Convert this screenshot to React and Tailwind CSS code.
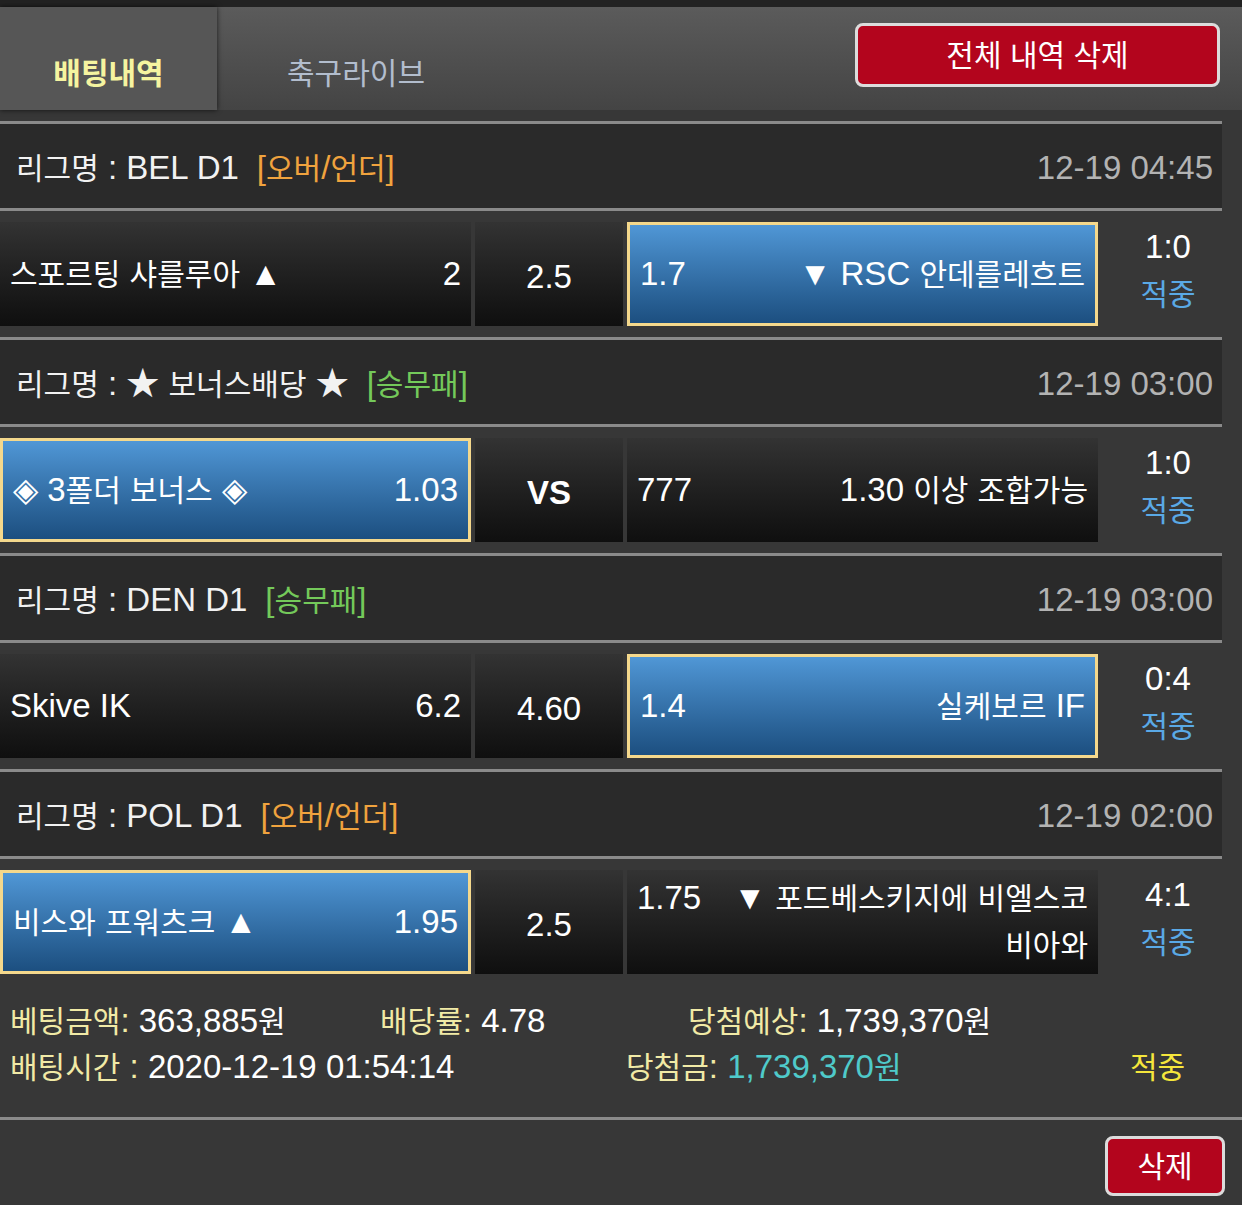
import React from 'react';

const bets = [
  {
    league: 'BEL D1', type: '[오버/언더]', typeColor: 'text-[#f0a33e]', time: '12-19 04:45',
    home: '스포르팅 샤를루아 ▲', homeOdds: '2', mid: '2.5', awayOdds: '1.7', away: '▼ RSC 안데를레흐트',
    pick: 'away', score: '1:0', result: '적중',
  },
  {
    league: '★ 보너스배당 ★', type: '[승무패]', typeColor: 'text-[#74c95a]', time: '12-19 03:00',
    home: '◈ 3폴더 보너스 ◈', homeOdds: '1.03', mid: 'VS', midBold: true, awayOdds: '777', away: '1.30 이상 조합가능',
    pick: 'home', score: '1:0', result: '적중',
  },
  {
    league: 'DEN D1', type: '[승무패]', typeColor: 'text-[#74c95a]', time: '12-19 03:00',
    home: 'Skive IK', homeOdds: '6.2', mid: '4.60', awayOdds: '1.4', away: '실케보르 IF',
    pick: 'away', score: '0:4', result: '적중',
  },
  {
    league: 'POL D1', type: '[오버/언더]', typeColor: 'text-[#f0a33e]', time: '12-19 02:00',
    home: '비스와 프워츠크 ▲', homeOdds: '1.95', mid: '2.5', awayOdds: '1.75', away: '▼ 포드베스키지에 비엘스코 비아와',
    pick: 'home', score: '4:1', result: '적중',
  },
];

// hangul glyphs run narrower in the original, so they get a slightly smaller size than latin text
const T = ({ children }) =>
  String(children)
    .split(/([\u3131-\uD7A3]+)/)
    .map((p, i) => (/[\u3131-\uD7A3]/.test(p) ? <span key={i} className="text-[30px]">{p}</span> : p));

const cellBase = 'flex h-[104px] items-center px-[10px] text-white';
const darkCell = 'bg-gradient-to-b from-[#333333] to-[#0f0f0f]';
const pickedCell = 'border-[3px] border-[#f4d88c] bg-gradient-to-b from-[#5097d6] to-[#1c4f80] px-[7px]';

const Line = () => <div className="h-[3px] w-[1222px] bg-[#8a8a8a]" />;

const BetRow = ({ bet }) => (
  <div>
    <Line />
    <div className="flex h-[84px] w-[1222px] items-center justify-between bg-[#2a2a2a] pl-[16px] pr-[9px] pt-[4px]">
      <div className="text-[#f2f2f2]">
        <T>{`리그명 : ${bet.league}`}</T>
        <span className={`ml-[18px] ${bet.typeColor}`}><T>{bet.type}</T></span>
      </div>
      <div className="text-[#b3b3b3]">{bet.time}</div>
    </div>
    <Line />
    <div className="flex h-[126px] w-[1222px] items-center gap-[4px]">
      <div className={`${cellBase} w-[471px] justify-between ${bet.pick === 'home' ? pickedCell : darkCell}`}>
        <span><T>{bet.home}</T></span>
        <span>{bet.homeOdds}</span>
      </div>
      <div className={`${cellBase} w-[148px] justify-center pt-[6px] ${darkCell} ${bet.midBold ? 'font-bold' : ''}`}>
        {bet.mid}
      </div>
      <div className={`${cellBase} w-[471px] ${bet.pick === 'away' ? pickedCell : darkCell}`}>
        <div className="w-full break-keep leading-[46px]">
          <span className="float-left">{bet.awayOdds}</span>
          <div className="text-right"><T>{bet.away}</T></div>
        </div>
      </div>
      <div className="flex flex-1 flex-col items-center pl-[12px] pb-[8px] leading-[47px]">
        <span className="text-white">{bet.score}</span>
        <span className="text-[#5aa9e6]"><T>{bet.result}</T></span>
      </div>
    </div>
  </div>
);

export default function App() {
  return (
    <div className="min-h-[1205px] w-[1242px] bg-[#373737] font-['Liberation_Sans','Noto_Sans_CJK_KR',sans-serif] text-[33px]">
      <div className="h-[7px] bg-[#222222]" />
      <div className="flex h-[103px] bg-gradient-to-b from-[#5b5b5b] to-[#444444] text-[30px]">
        <div className="flex w-[217px] items-center justify-center bg-[#565656] pt-[29px] shadow-[0_0_5px_rgba(0,0,0,0.7)]">
          <span className="font-bold text-[#f5f4a0]">배팅내역</span>
        </div>
        <div className="flex w-[278px] items-center justify-center pt-[29px] text-[#b2bdcd]">축구라이브</div>
        <div className="flex flex-1 items-start justify-end pr-[22px] pt-[16px]">
          <button className="h-[64px] w-[365px] rounded-[8px] border-[3px] border-[#dcdcdc] bg-[#b3051d] text-white">
            전체 내역 삭제
          </button>
        </div>
      </div>
      <div className="h-[11px]" />

      {bets.map((bet, i) => (
        <BetRow key={i} bet={bet} />
      ))}

      <div className="h-[132px] px-[10px] pt-[13px] leading-[45px] text-white">
        <div className="flex">
          <div className="w-[370px]"><span className="text-[#f1eaa6]"><T>베팅금액:</T></span> <T>363,885원</T></div>
          <div className="w-[308px]"><span className="text-[#f1eaa6]"><T>배당률:</T></span> 4.78</div>
          <div><span className="text-[#f1eaa6]"><T>당첨예상:</T></span> <T>1,739,370원</T></div>
        </div>
        <div className="flex">
          <div className="w-[616px]"><span className="text-[#f1eaa6]"><T>배팅시간 :</T></span> 2020-12-19 01:54:14</div>
          <div className="w-[504px]"><span className="text-[#f1eaa6]"><T>당첨금:</T></span> <span className="text-[#4fcaca]"><T>1,739,370원</T></span></div>
          <div className="text-[#f5e63c]"><T>적중</T></div>
        </div>
      </div>
      <div className="h-[3px] bg-[#8a8a8a]" />
      <div className="flex h-[85px] justify-end pr-[17px] pt-[16px]">
        <button className="h-[60px] w-[120px] rounded-[8px] border-[3px] border-[#dcdcdc] bg-[#b3051d] text-[30px] text-white">
          삭제
        </button>
      </div>
    </div>
  );
}
